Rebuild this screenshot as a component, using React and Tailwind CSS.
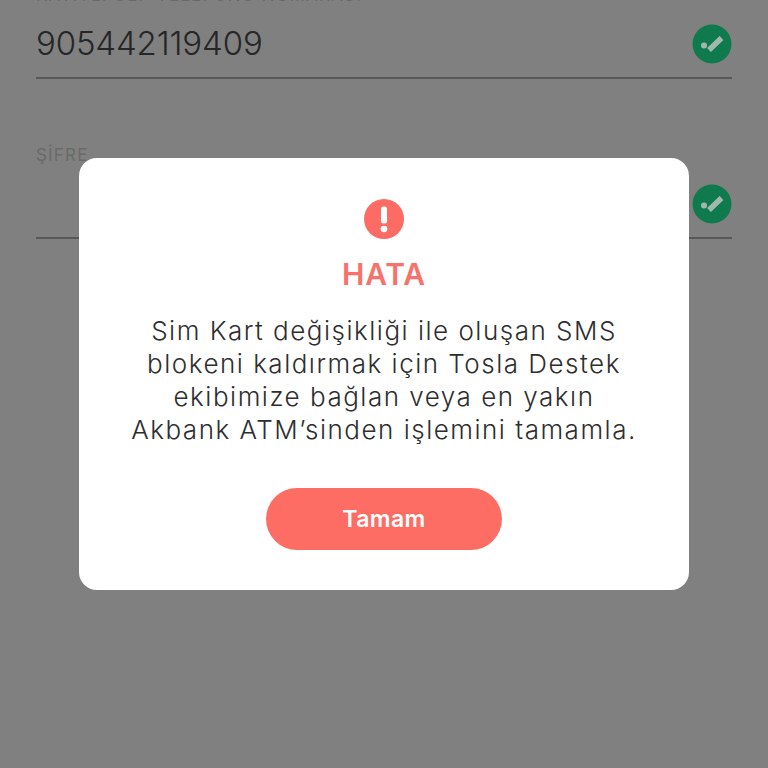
import React from 'react';

const font = { fontFamily: 'Inter, "Noto Sans", sans-serif' };

const CheckBadge = () => (
  <svg width="40" height="40" viewBox="0 0 40 40" className="shrink-0">
    <circle cx="20" cy="20" r="19.5" fill="#0f7a4e" />
    <circle cx="12" cy="21.5" r="3" fill="#a3b8ac" />
    <path d="M17 26 L29.5 14" stroke="#a3b8ac" strokeWidth="5.5" fill="none" />
  </svg>
);

const Field = ({ label, value, className }) => (
  <div className={className}>
    <div className="text-[17px] leading-[20px] tracking-[1.2px] text-[#6a6a6a] h-[20px] whitespace-nowrap">{label}</div>
    <div className="flex items-center justify-between h-[49px] mt-[14px]">
      <span className="text-[33px] font-light tracking-[-0.15px] text-[#262626] leading-none">{value}</span>
      <CheckBadge />
    </div>
    <div className="h-[2px] bg-[#585858] mt-[9px]" />
  </div>
);

export default function App() {
  return (
    <div className="relative w-[768px] h-[768px] overflow-hidden bg-[#808080]" style={font}>
      <div className="px-9 -mt-[15px]">
        <Field label="KAYITLI CEP TELEFONU NUMARASI" value="905442119409" />
        <Field label="ŞİFRE" value="" className="mt-[66px]" />
      </div>

      <div className="absolute inset-0 flex justify-center pt-[158px]">
        <div className="w-[610px] h-[432px] bg-white rounded-[18px] flex flex-col items-center pt-[41px]">
          <svg width="40" height="40" viewBox="0 0 40 40">
            <circle cx="20" cy="20" r="20" fill="#fc6c64" />
            <rect x="17" y="7.5" width="6" height="17" rx="2.5" fill="#fff" />
            <circle cx="20" cy="30" r="3.3" fill="#fff" />
          </svg>
          <h1 className="mt-[17px] text-[30px] leading-[36px] font-semibold tracking-[0.8px] text-[#f8716a]">HATA</h1>
          <p className="mt-[22px] text-[26px] font-light leading-[33px] tracking-[1.5px] text-[#2e2e2e] text-center whitespace-nowrap">
            Sim Kart değişikliği ile oluşan SMS
            <br />
            blokeni kaldırmak için Tosla Destek
            <br />
            ekibimize bağlan veya en yakın
            <br />
            Akbank ATM’sinden işlemini tamamla.
          </p>
          <button className="mt-[42px] w-[236px] h-[62px] rounded-full bg-[#fe6d64] text-white text-[23px] tracking-[0.4px] font-semibold">
            Tamam
          </button>
        </div>
      </div>
    </div>
  );
}
